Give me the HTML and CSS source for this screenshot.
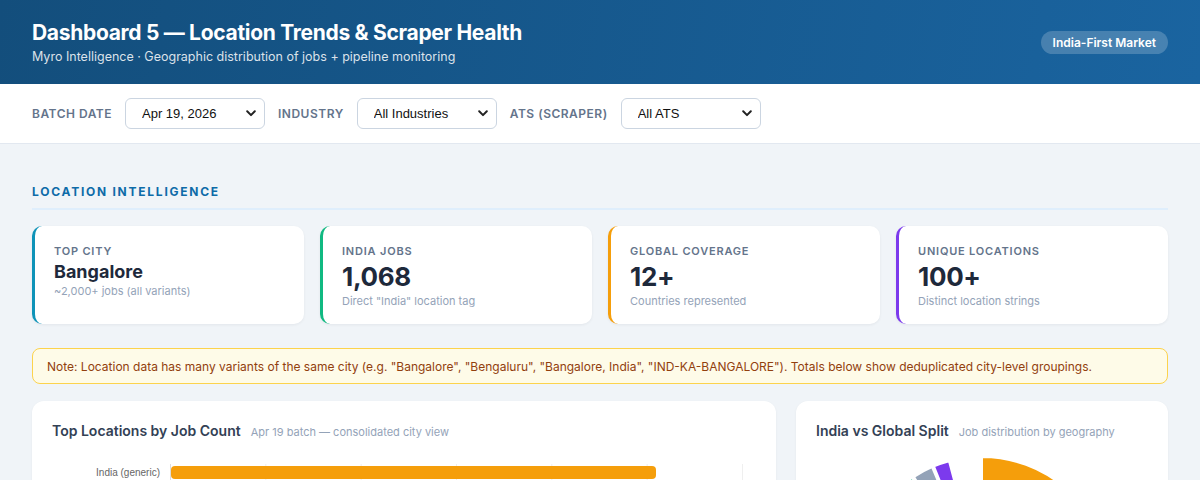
FILE: index.html
```html
<!DOCTYPE html>
<html lang="en">
<head>
    <meta charset="UTF-8">
    <title>Dashboard 5 — Location Trends &amp; Scraper Health</title>
    <link rel="stylesheet" href="styles.css">
</head>
<body>
    <header class="top">
        <div>
            <h1 class="top-title">Dashboard 5 — Location Trends &amp; Scraper Health</h1>
            <p class="top-sub">Myro Intelligence · Geographic distribution of jobs + pipeline monitoring</p>
        </div>
        <span class="badge">India-First Market</span>
    </header>

    <div class="filters">
        <label class="filter-label" for="batch">Batch Date</label>
        <div class="select-wrap">
            <select id="batch">
                <option>Apr 19, 2026</option>
                <option>Apr 12, 2026</option>
            </select>
            <svg class="chev" width="10" height="7" viewBox="0 0 10 7"><path d="M1.2 1.3 5 5.1 8.8 1.3" fill="none" stroke="#222" stroke-width="2" stroke-linecap="round" stroke-linejoin="round"/></svg>
        </div>
        <label class="filter-label" for="industry">Industry</label>
        <div class="select-wrap">
            <select id="industry">
                <option>All Industries</option>
            </select>
            <svg class="chev" width="10" height="7" viewBox="0 0 10 7"><path d="M1.2 1.3 5 5.1 8.8 1.3" fill="none" stroke="#222" stroke-width="2" stroke-linecap="round" stroke-linejoin="round"/></svg>
        </div>
        <label class="filter-label" for="ats">ATS (Scraper)</label>
        <div class="select-wrap">
            <select id="ats">
                <option>All ATS</option>
            </select>
            <svg class="chev" width="10" height="7" viewBox="0 0 10 7"><path d="M1.2 1.3 5 5.1 8.8 1.3" fill="none" stroke="#222" stroke-width="2" stroke-linecap="round" stroke-linejoin="round"/></svg>
        </div>
    </div>

    <main class="main">
        <h2 class="section-title">Location Intelligence</h2>

        <div class="kpis">
            <div class="kpi kpi-teal">
                <div class="kpi-label">Top City</div>
                <div class="kpi-value kpi-value-sm">Bangalore</div>
                <div class="kpi-sub">~2,000+ jobs (all variants)</div>
            </div>
            <div class="kpi kpi-green">
                <div class="kpi-label">India Jobs</div>
                <div class="kpi-value">1,068</div>
                <div class="kpi-sub">Direct "India" location tag</div>
            </div>
            <div class="kpi kpi-orange">
                <div class="kpi-label">Global Coverage</div>
                <div class="kpi-value">12+</div>
                <div class="kpi-sub">Countries represented</div>
            </div>
            <div class="kpi kpi-purple">
                <div class="kpi-label">Unique Locations</div>
                <div class="kpi-value">100+</div>
                <div class="kpi-sub">Distinct location strings</div>
            </div>
        </div>

        <div class="note">Note: Location data has many variants of the same city (e.g. "Bangalore", "Bengaluru", "Bangalore, India", "IND-KA-BANGALORE"). Totals below show deduplicated city-level groupings.</div>

        <div class="charts">
            <div class="card">
                <div class="card-head">
                    <h3 class="card-title">Top Locations by Job Count</h3>
                    <span class="card-sub">Apr 19 batch — consolidated city view</span>
                </div>
                <div class="bar-chart">
                    <div class="bar-labels">
                        <span>India (generic)</span>
                        <span>Bangalore</span>
                        <span>Hyderabad</span>
                        <span>Pune</span>
                        <span>Mumbai</span>
                        <span>Chennai</span>
                        <span>Gurgaon</span>
                        <span>Remote</span>
                    </div>
                    <div class="plot">
                        <div class="bar" style="width: 84.8%"></div>
                        <div class="bar" style="width: 71%"></div>
                        <div class="bar" style="width: 42%"></div>
                        <div class="bar" style="width: 31%"></div>
                        <div class="bar" style="width: 26%"></div>
                        <div class="bar" style="width: 22%"></div>
                        <div class="bar" style="width: 17%"></div>
                        <div class="bar" style="width: 12%"></div>
                    </div>
                </div>
            </div>

            <div class="card">
                <div class="card-head">
                    <h3 class="card-title">India vs Global Split</h3>
                    <span class="card-sub">Job distribution by geography</span>
                </div>
                <div class="donut">
                    <svg width="300" height="280" viewBox="0 0 300 280">
                        <g stroke="#fff" stroke-width="2" stroke-linejoin="round">
                            <!-- India -->
                            <path fill="#f59e0b" d="M150 10 A128 128 0 1 1 29.7 181.8 L89.9 159.9 A64 64 0 1 0 150 74 Z"/>
                            <!-- US -->
                            <path fill="#0891b2" d="M29.7 181.8 A128 128 0 0 1 39.1 74 L94.6 106 A64 64 0 0 0 89.9 159.9 Z"/>
                            <!-- UK -->
                            <path fill="#10b981" d="M39.1 74 A128 128 0 0 1 80.1 31 L115.1 85.1 A64 64 0 0 0 94.6 106 Z"/>
                            <!-- Remote -->
                            <path fill="#94a3b8" d="M82 29.9 A128 128 0 0 1 100 20.2 L125 79.1 A64 64 0 0 0 116 84.5 Z"/>
                            <!-- Other -->
                            <path fill="#7c3aed" d="M102 19.4 A128 128 0 0 1 117 14.3 L133.5 76.2 A64 64 0 0 0 126 78.7 Z"/>
                        </g>
                    </svg>
                </div>
            </div>
        </div>
    </main>
</body>
</html>
```

FILE: styles.css
```css
* {
    box-sizing: border-box;
}

body {
    margin: 0;
    background: #f0f4f8;
    font-family: Inter, "Noto Sans", sans-serif;
    color: #1e293b;
}

h1, h2, h3, p {
    margin: 0;
}

/* header */
.top {
    height: 84px;
    padding: 0 32px;
    display: flex;
    align-items: center;
    justify-content: space-between;
    background: linear-gradient(100deg, #134e7c 0%, #1a64a0 100%);
    color: #ffffff;
}
.top-title {
    font-size: 21px;
    font-weight: 700;
    line-height: 26px;
    letter-spacing: -0.3px;
}
.top-sub {
    font-size: 12.5px;
    line-height: 16px;
    margin-top: 3px;
    color: rgba(255, 255, 255, 0.85);
}
.badge {
    padding: 4px 12px;
    border-radius: 12px;
    background: rgba(255, 255, 255, 0.2);
    font-size: 12px;
    font-weight: 600;
    line-height: 15px;
    margin-top: 1px;
}

/* filter bar */
.filters {
    height: 60px;
    padding: 0 32px;
    display: flex;
    align-items: center;
    gap: 13px;
    background: #ffffff;
    border-bottom: 1px solid #e2e8f0;
}
.filter-label {
    font-size: 12px;
    font-weight: 600;
    letter-spacing: 0.5px;
    text-transform: uppercase;
    color: #64748b;
}
.select-wrap {
    position: relative;
}
.select-wrap select {
    appearance: none;
    -webkit-appearance: none;
    width: 140px;
    height: 31px;
    padding: 0 28px 0 16px;
    border: 1px solid #cbd5e1;
    border-radius: 6px;
    background: #ffffff;
    font-family: "Liberation Sans", Arial, sans-serif;
    font-size: 13px;
    color: #111111;
}
.chev {
    position: absolute;
    right: 9px;
    top: 12px;
    pointer-events: none;
}

/* main */
.main {
    padding: 40px 32px;
}
.section-title {
    font-size: 12px;
    line-height: 16px;
    font-weight: 700;
    letter-spacing: 1.75px;
    text-transform: uppercase;
    color: #0e6ba8;
    padding-bottom: 8px;
    border-bottom: 2px solid #dfeefc;
    margin-bottom: 16px;
}

.kpis {
    display: grid;
    grid-template-columns: repeat(4, 1fr);
    gap: 16px;
}
.kpi {
    background: #ffffff;
    border-radius: 10px;
    border-left: 3px solid #0891b2;
    padding: 18px 20px 16px 19px;
    box-shadow: 0 1px 3px rgba(15, 23, 42, 0.06);
}
.kpi-teal { border-left-color: #0e93b8; }
.kpi-green { border-left-color: #10b981; }
.kpi-orange { border-left-color: #f59e0b; }
.kpi-purple { border-left-color: #7c3aed; }

.kpi-label {
    font-size: 11px;
    line-height: 14px;
    font-weight: 600;
    letter-spacing: 0.8px;
    text-transform: uppercase;
    color: #64748b;
    margin-bottom: 4px;
}
.kpi-value {
    font-size: 26px;
    line-height: 30px;
    font-weight: 700;
    color: #1e293b;
    letter-spacing: -0.3px;
}
.kpi-value-sm {
    font-size: 18px;
    line-height: 20px;
    letter-spacing: 0;
}
.kpi-sub {
    font-size: 11px;
    line-height: 14px;
    margin-top: 2px;
    color: #94a3b8;
}

.note {
    margin: 24px 0 17px;
    height: 36px;
    padding: 0 14px;
    display: flex;
    align-items: center;
    background: #fefbe8;
    border: 1px solid #fcd34d;
    border-radius: 8px;
    font-size: 12px;
    color: #92400e;
}

/* charts */
.charts {
    display: grid;
    grid-template-columns: 2fr 1fr;
    gap: 20px;
}
.card {
    background: #ffffff;
    border-radius: 12px;
    padding: 20px;
    box-shadow: 0 1px 3px rgba(15, 23, 42, 0.05);
}
.card-head {
    display: flex;
    align-items: baseline;
    gap: 10px;
    line-height: 20px;
}
.card-title {
    font-size: 14px;
    font-weight: 600;
    color: #334155;
}
.card-sub {
    font-size: 11px;
    color: #94a3b8;
}

.bar-chart {
    margin-top: 22px;
    display: flex;
    gap: 10px;
    font-family: "Liberation Sans", Arial, sans-serif;
}
.bar-labels {
    width: 108px;
    padding-top: 2px;
    display: flex;
    flex-direction: column;
    gap: 15px;
    align-items: flex-end;
    font-size: 10px;
    line-height: 13px;
    color: #666666;
}
.plot {
    width: 573px;
    padding-top: 2px;
    display: flex;
    flex-direction: column;
    gap: 15px;
    border-left: 1px solid #dddddd;
    background-image: linear-gradient(to right, #eeeeee 1px, transparent 1px);
    background-size: calc(572px / 6) 100%;
    background-position: -1px 0;
}
.bar {
    height: 13px;
    background: #f59e0b;
    border-radius: 4px;
}

.donut {
    margin-top: 5px;
    display: flex;
    justify-content: center;
}
```
